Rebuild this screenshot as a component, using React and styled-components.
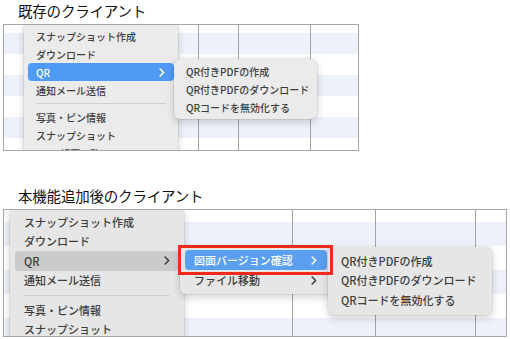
import styled, { createGlobalStyle } from "styled-components";

const GlobalStyle = createGlobalStyle`
  body {
    margin: 0;
    background: #fff;
    font-family: "Noto Sans CJK JP", "Noto Sans", sans-serif;
  }
`;

const Page = styled.div`
  display: flex;
  flex-direction: column;
  gap: 34px;
`;

const Figure = styled.section`
  display: flex;
  flex-direction: column;
`;

const Caption = styled.div`
  height: 24px;
  padding-left: 18px;
  font-size: 14.5px;
  line-height: 22px;
  color: #111;
  letter-spacing: -0.2px;
`;

const Frame = styled.div`
  position: relative;
  overflow: hidden;
  box-sizing: border-box;
  margin-left: 3px;
  width: ${(p) => p.$w}px;
  height: ${(p) => p.$h}px;
  border: 1px solid #a6a6a6;
`;

const Table = styled.div`
  display: flex;
  flex-direction: column;
`;

const Row = styled.div`
  display: flex;
  flex: none;
  height: ${(p) => p.$h}px;
  background: ${(p) => (p.$shade ? "#edf1f9" : "#fff")};
`;

const Cell = styled.div`
  box-sizing: border-box;
  flex: ${(p) => (p.$w ? "none" : 1)};
  width: ${(p) => (p.$w ? p.$w + "px" : "auto")};
  border-right: ${(p) => (p.$w ? "1px solid #a3a3a3" : "none")};
`;

const Menu = styled.div`
  position: absolute;
  left: ${(p) => p.$left}px;
  top: ${(p) => p.$top}px;
  width: ${(p) => p.$w}px;
  box-sizing: border-box;
  padding: ${(p) => p.$pad};
  background: ${(p) => p.$bg || "#ebebeb"};
  border-radius: 6px;
  box-shadow: 0 0 0 0.5px rgba(0, 0, 0, 0.12), 0 3px 9px rgba(0, 0, 0, 0.18);
`;

const Item = styled.div`
  position: relative;
  display: flex;
  align-items: center;
  justify-content: space-between;
  height: ${(p) => p.$h}px;
  padding: ${(p) => p.$pad};
  border-radius: 4px;
  font-size: ${(p) => p.$fs}px;
  font-weight: 500;
  white-space: nowrap;
  color: ${(p) => (p.$state === "active" ? "#fff" : "#3d3d3d")};
  background: ${(p) =>
    p.$state === "active" ? p.$blue || "#4f9af5" : p.$state === "hover" ? "#cbcbcb" : "transparent"};
`;

const Separator = styled.div`
  height: 1px;
  margin: ${(p) => p.$m};
  background: #cfcfcf;
`;

const Callout = styled.div`
  position: absolute;
  left: -7px;
  right: -6px;
  top: -5px;
  bottom: -4.5px;
  border: 3.5px solid #f02a1c;
  z-index: 5;
`;

const Chevron = () => (
  <svg width="6" height="9" viewBox="0 0 6 9">
    <path d="M1.2 1l3.4 3.5L1.2 8" fill="none" stroke="currentColor" strokeWidth="1.6" strokeLinecap="round" strokeLinejoin="round" />
  </svg>
);

const StripedTable = ({ rows, cols }) => (
  <Table>
    {rows.map((h, i) => (
      <Row key={i} $h={h} $shade={i % 2 === 1}>
        {cols.map((w, j) => (
          <Cell key={j} $w={w} />
        ))}
      </Row>
    ))}
  </Table>
);

const subItems = ["QR付きPDFの作成", "QR付きPDFのダウンロード", "QRコードを無効化する"];

const ContextMenu = ({ left, top, w, pad, h, fs, itemPad, sepMargin, qrState, bg }) => {
  const item = (label, state, arrow) => (
    <Item $h={h} $fs={fs} $pad={itemPad} $state={state}>
      <span>{label}</span>
      {arrow && <Chevron />}
    </Item>
  );
  return (
    <Menu $left={left} $top={top} $w={w} $pad={pad} $bg={bg}>
      {item("スナップショット作成")}
      {item("ダウンロード")}
      {item("QR", qrState, true)}
      {item("通知メール送信")}
      <Separator $m={sepMargin} />
      {item("写真・ピン情報")}
      {item("スナップショット")}
      {item("Excel帳票一覧")}
    </Menu>
  );
};

export default function App() {
  return (
    <>
      <GlobalStyle />
      <Page>
        <Figure>
          <Caption>既存のクライアント</Caption>
          <Frame $w={356} $h={127}>
            <StripedTable rows={[8, 21, 21, 21, 21, 21, 21]} cols={[195, 40, 72, 0]} />
            <ContextMenu
              left={20}
              top={-3}
              w={154}
              pad="5px 4px"
              h={18}
              fs={10}
              itemPad="0 9px 0 8px"
              sepMargin="4px 8px"
              qrState="active"
            />
            <Menu $left={170} $top={34} $w={143} $pad="3px 4px">
              {subItems.map((s) => (
                <Item key={s} $h={18} $fs={10} $pad="0 8px">
                  {s}
                </Item>
              ))}
            </Menu>
          </Frame>
        </Figure>
        <Figure>
          <Caption>本機能追加後のクライアント</Caption>
          <Frame $w={504} $h={128}>
            <StripedTable rows={[12, 24, 24, 24, 24, 24]} cols={[289, 83, 100, 0]} />
            <ContextMenu
              left={6}
              top={-3}
              w={174}
              pad="5px 5px"
              h={19.5}
              fs={11}
              itemPad="0 9px"
              sepMargin="4.5px 9px"
              qrState="hover"
              bg="#e6e6e6"
            />
            <Menu $left={176} $top={36} $w={152} $pad="4px 5px" $bg="#e6e6e6">
              <Item $h={20} $fs={11} $pad="0 10px 0 9px" $state="active" $blue="#5b9ff0">
                <span>図面バージョン確認</span>
                <Chevron />
                <Callout />
              </Item>
              <Item $h={20} $fs={11} $pad="0 10px 0 9px">
                <span>ファイル移動</span>
                <Chevron />
              </Item>
            </Menu>
            <Menu $left={324} $top={37} $w={164} $pad="4px 4px 5px" $bg="#e6e6e6">
              {subItems.map((s) => (
                <Item key={s} $h={19.5} $fs={11} $pad="0 9px">
                  {s}
                </Item>
              ))}
            </Menu>
          </Frame>
        </Figure>
      </Page>
    </>
  );
}
